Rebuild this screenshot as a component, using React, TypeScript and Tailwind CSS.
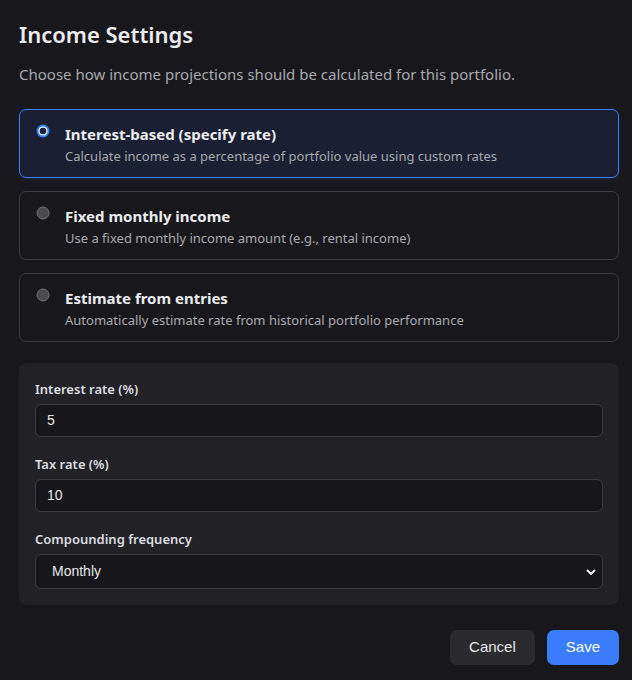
import React from "react";

function Radio({ checked }: { checked: boolean }) {
  return checked ? (
    <svg width="14" height="14" viewBox="0 0 14 14" className="shrink-0">
      <circle cx="7" cy="7" r="6.5" fill="#2f86f0" />
      <circle cx="7" cy="7" r="4.6" fill="#f2f6ff" />
      <circle cx="7" cy="7" r="3.3" fill="#1a1f33" />
    </svg>
  ) : (
    <svg width="14" height="14" viewBox="0 0 14 14" className="shrink-0">
      <circle cx="7" cy="7" r="6" fill="#4a4a4f" stroke="#707075" strokeWidth="1" />
    </svg>
  );
}

function Option({ title, desc, checked }: { title: string; desc: string; checked?: boolean }) {
  return (
    <div
      className={
        checked
          ? "flex h-[69px] gap-[15px] rounded-[7px] border border-[#3b7ff5] bg-[#1a1f33] px-[16px] pt-[13px] shadow-[0_2px_6px_rgba(59,127,245,0.12)]"
          : "flex h-[69px] gap-[15px] rounded-[7px] border border-[#3a3a40] bg-[#18181c] px-[16px] pt-[13px]"
      }
    >
      <div className="pt-[1px]">
        <Radio checked={!!checked} />
      </div>
      <div className="flex flex-col">
        <div className="text-[15px] font-bold leading-[22px] text-[#ececef]">{title}</div>
        <div className="mt-[2px] text-[13px] leading-[18px] text-[#a8a8ae]">{desc}</div>
      </div>
    </div>
  );
}

function Field({ label, value }: { label: string; value: string }) {
  return (
    <div className="flex flex-col">
      <div className="mb-[6px] text-[13px] font-semibold leading-[18px] text-[#dcdce0]">{label}</div>
      <div className="flex h-[33px] items-center rounded-[6px] border border-[#3a3a40] bg-[#17171b] px-[11px] font-['Liberation_Sans',Arial,sans-serif] text-[14px] text-[#e6e6ea]">
        {value}
      </div>
    </div>
  );
}

export default function App() {
  return (
    <div className="min-h-[680px] w-full bg-[#18181c] pt-[19px] pb-[15px] font-['Noto_Sans',sans-serif] text-white">
      <div className="ml-[19px] w-[600px]">
        <h1 className="text-[22px] font-semibold leading-[30px] text-[#ececef]">Income Settings</h1>
        <p className="mt-[15px] text-[15px] leading-[20px] text-[#a8a8ae]">
          Choose how income projections should be calculated for this portfolio.
        </p>
        <div className="mt-[25px] flex flex-col gap-[13px]">
          <Option
            checked
            title="Interest-based (specify rate)"
            desc="Calculate income as a percentage of portfolio value using custom rates"
          />
          <Option title="Fixed monthly income" desc="Use a fixed monthly income amount (e.g., rental income)" />
          <Option title="Estimate from entries" desc="Automatically estimate rate from historical portfolio performance" />
        </div>
        <div className="mt-[21px] flex flex-col gap-[18px] rounded-[8px] bg-[#222226] px-[16px] pt-[17px] pb-[16px]">
          <Field label="Interest rate (%)" value="5" />
          <Field label="Tax rate (%)" value="10" />
          <div className="flex flex-col">
            <div className="mb-[6px] text-[13px] font-semibold leading-[18px] text-[#dcdce0]">Compounding frequency</div>
            <div className="flex h-[35px] items-center justify-between rounded-[6px] border border-[#3a3a40] bg-[#17171b] pl-[16px] pr-[4px] font-['Liberation_Sans',Arial,sans-serif] text-[14px] text-[#e6e6ea]">
              <span>Monthly</span>
              <svg width="14" height="14" viewBox="0 0 14 14">
                <path d="M3.5 5.5 L7 9 L10.5 5.5" fill="none" stroke="#e6e6ea" strokeWidth="2" strokeLinecap="round" strokeLinejoin="round" />
              </svg>
            </div>
          </div>
        </div>
        <div className="mt-[25px] flex justify-end gap-[12px] font-['Liberation_Sans',Arial,sans-serif] text-[15px]">
          <button className="h-[35px] rounded-[7px] bg-[#2a2a2f] px-[19px] text-[#e6e6ea]">Cancel</button>
          <button className="h-[35px] rounded-[7px] bg-[#3b7cfc] px-[19px] text-white">Save</button>
        </div>
      </div>
    </div>
  );
}
